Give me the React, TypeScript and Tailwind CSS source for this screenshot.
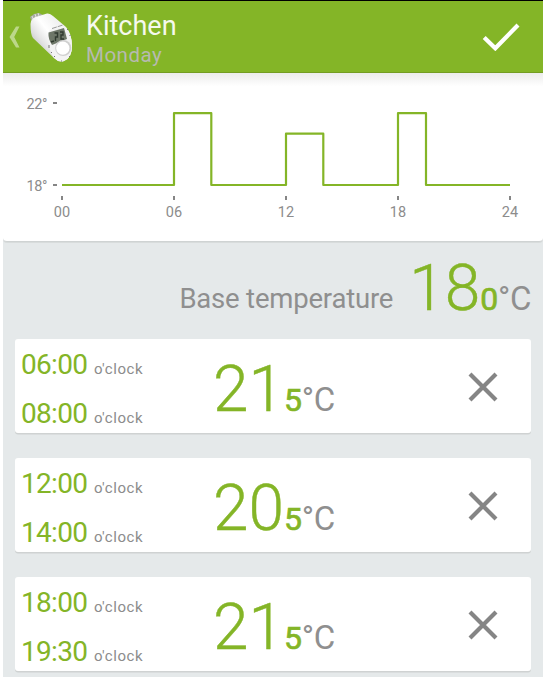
import React from 'react';

type Slot = { from: string; to: string; whole: string; tenth: string };

const slots: Slot[] = [
  { from: '06:00', to: '08:00', whole: '21', tenth: '5' },
  { from: '12:00', to: '14:00', whole: '20', tenth: '5' },
  { from: '18:00', to: '19:30', whole: '21', tenth: '5' },
];

function Thermostat() {
  return (
    <svg className="ml-[9px] mt-[11px] h-[50px] w-[43px] shrink-0" viewBox="0 0 43 50">
      <defs>
        <linearGradient id="body" x1="0.1" y1="0.8" x2="0.75" y2="0.2">
          <stop offset="0" stopColor="#b9bbb9" />
          <stop offset="0.3" stopColor="#e2e2e2" />
          <stop offset="0.6" stopColor="#ffffff" />
          <stop offset="1" stopColor="#eeeeee" />
        </linearGradient>
      </defs>
      <path d="M0 5 4 2 9 1 13 3 12 8 2 10Z" fill="#a9aca4" />
      <path d="M2 4 4 9M5 2 7 8M8 1 10 7" stroke="#dfe1dc" strokeWidth="1" />
      <path d="M0.500 12Q1 5 9 4L17 1.500Q20 1 23 4L36 15Q42 22 42 34Q42 46 34 49Q29 51 24 46L3 26Q0.500 23 0.500 12Z" fill="url(#body)" />
      <path d="M19 19Q29 11 36 16Q42 23 42 34Q42 46 34 49Q29 51 24 46Q17 36 19 19Z" fill="#f3f3f3" />
      <path d="M22 16.500 33 13" stroke="#999" strokeWidth="1" strokeDasharray="5 1" />
      <path d="M18.500 20.500 34 16 37 27 22 33Q18 27 18.500 20.500Z" fill="#6d7668" />
      <path d="M24.500 21h3v4h-2v4M30 20h3v3h-2v4h3M21 30l3-1" stroke="#303a30" strokeWidth="1.400" fill="none" />
      <circle cx="33.200" cy="36" r="8" fill="#cfcfcf" />
      <circle cx="32.800" cy="36.200" r="6.600" fill="#fff" />
      <path d="M19 33v3M21 40l1 1M24 44l1 1M39 45l1-1M31 49h1M37 17l1 1M40 23v1" stroke="#777" strokeWidth="1" />
    </svg>
  );
}

function Header() {
  return (
    <header className="flex h-[73px] shrink-0 border-b border-t border-b-[#749d22] border-t-black bg-[#84b527]">
      <svg className="ml-[6px] mt-[25px] h-[22px] w-[12px] shrink-0" viewBox="0 0 12 22">
        <path d="M7 0.500h3.500L5.200 11l5.300 10.500H7L0.500 11Z" fill="#bcd78a" />
      </svg>
      <Thermostat />
      <div className="ml-[13px] flex-1 pt-[9px]">
        <div className="text-[27px] leading-[32px] text-[#f5f9ed]">Kitchen</div>
        <div className="mt-[1px] text-[20.500px] leading-[25px] tracking-[0.5px] text-[#b7bab0]">Monday</div>
      </div>
      <svg className="mr-[23px] mt-[21px] h-[29px] w-[38px]" viewBox="0 0 38 29">
        <path d="M2.200 15.500 13.300 26.300 36 3" fill="none" stroke="white" strokeWidth="4.200" />
      </svg>
    </header>
  );
}

function Chart() {
  const hours = ['00', '06', '12', '18', '24'];
  return (
    <section className="h-[169px] shrink-0 rounded-b-[4px] border-b border-[#cfd3d3] bg-white bg-linear-to-b from-[#ececec] via-white via-8% to-white shadow-[0_1px_0_#d8dcdc]">
      <svg className="block h-[167px] w-[540px]" viewBox="3 73 540 167">
        <g fill="#8c8c8c" fontSize="14.500">
          <text x="26.500" y="109" textLength="21">22°</text>
          <text x="26.500" y="191" textLength="21">18°</text>
          {hours.map((h, i) => (
            <text key={h} x={62 + i * 112} y="217" textAnchor="middle">{h}</text>
          ))}
        </g>
        <g fill="#858585">
          <rect x="53" y="102" width="4" height="2" />
          <rect x="53" y="184" width="4" height="2" />
          {hours.map((h, i) => (
            <rect key={h} x={61 + i * 112} y="196" width="2" height="4" />
          ))}
        </g>
        <path
          d="M62 185H174V113.200H211.300V185H286V133.700H323.300V185H398V113.200H426V185H510"
          fill="none" stroke="#84b527" strokeWidth="2.200" strokeLinejoin="round"
        />
      </svg>
    </section>
  );
}

function Temperature({ whole, tenth }: { whole: string; tenth: string }) {
  return (
    <div className="flex items-baseline whitespace-nowrap leading-[76px]">
      <span className="text-[64px] font-light text-[#84b527] [-webkit-text-stroke:0.4px_#84b527]">{whole}</span>
      <span className="text-[32px] tracking-[-0.200px] text-[#84b527] [-webkit-text-stroke:0.7px_#84b527]">{tenth}</span>
      <span className="text-[33px] tracking-[-0.400px] text-[#8f8f8f]">°C</span>
    </div>
  );
}

function Time({ value }: { value: string }) {
  return (
    <div className="flex h-[49px] items-baseline leading-[49px]">
      <span className="w-[73px] text-[28px] tracking-[-0.700px] text-[#84b527]">{value}</span>
      <span className="text-[15px] tracking-[0.550px] text-[#8c8c8c]">o'clock</span>
    </div>
  );
}

function SlotCard({ slot }: { slot: Slot }) {
  return (
    <div className="flex h-[94px] shrink-0 rounded-[3px] bg-white shadow-[0_1.500px_0_#cfd2d2]">
      <div className="w-[198px] shrink-0 pl-[6px] pt-[1px]">
        <Time value={slot.from} />
        <Time value={slot.to} />
      </div>
      <div className="w-[255px] shrink-0 pt-[13px]">
        <Temperature whole={slot.whole} tenth={slot.tenth} />
      </div>
      <svg className="mt-[33px] h-[30px] w-[30px] shrink-0" viewBox="0 0 30 30">
        <path d="M2 2 28 28M28 2 2 28" stroke="#858585" strokeWidth="4.200" />
      </svg>
    </div>
  );
}

export default function App() {
  return (
    <div className="h-[677px] overflow-hidden bg-white pl-[3px] font-['Roboto',sans-serif]">
      <div className="flex h-full w-[540px] flex-col bg-[#e5e9ea]">
        <Header />
        <Chart />
        <div className="flex h-[97px] shrink-0 items-start justify-end pr-[12px]">
          <span className="mr-[16px] pt-[22px] text-[27.500px] leading-[70px] tracking-[-0.200px] text-[#8f8f8f]">Base temperature</span>
          <div className="pt-[9px]">
            <Temperature whole="18" tenth="0" />
          </div>
        </div>
        <div className="flex flex-col gap-[25px] px-[12px]">
          {slots.map((slot) => (
            <SlotCard key={slot.from} slot={slot} />
          ))}
        </div>
      </div>
    </div>
  );
}
